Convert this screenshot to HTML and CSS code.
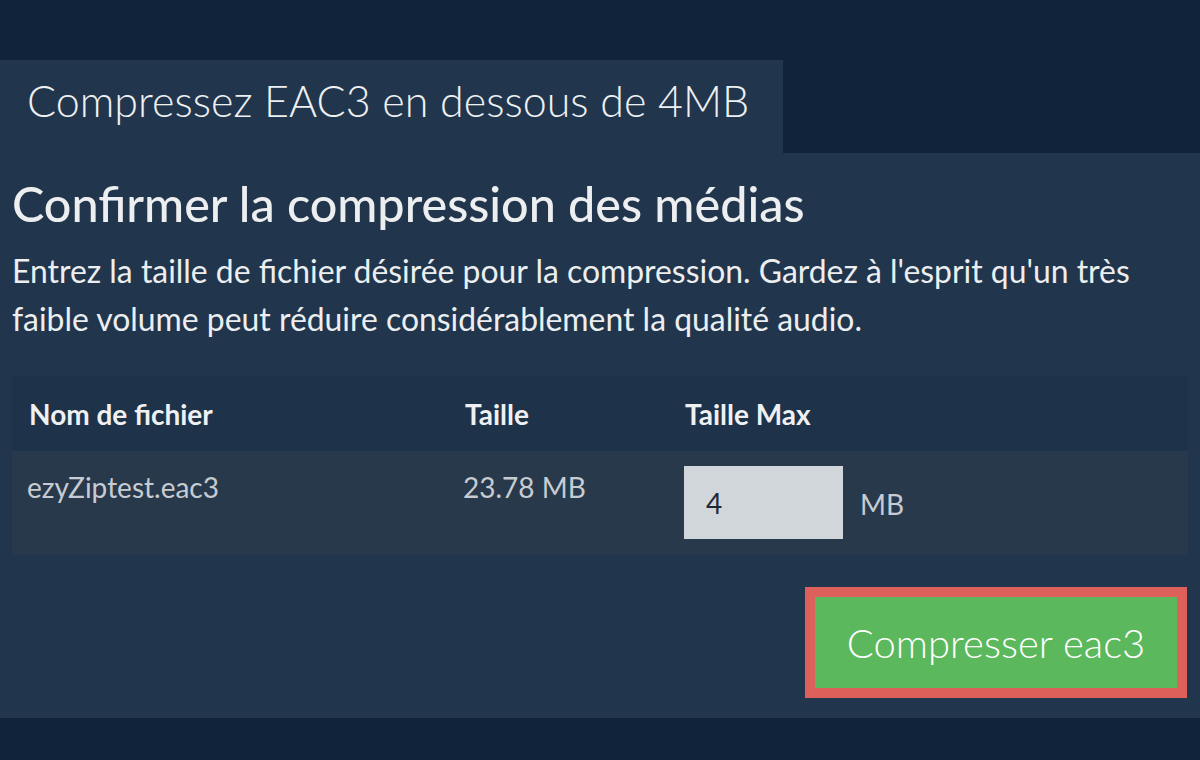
FILE: index.html
```html
<!DOCTYPE html>
<html lang="fr">
<head>
<meta charset="utf-8">
<link rel="stylesheet" href="styles.css">
</head>
<body>
<div class="page">
  <div class="tab">Compressez EAC3 en dessous de 4MB</div>
  <section class="panel">
    <h1 class="title">Confirmer la compression des médias</h1>
    <p class="desc">Entrez la taille de fichier désirée pour la compression. Gardez à l'esprit qu'un très faible volume peut réduire considérablement la qualité audio.</p>
    <div class="table">
      <div class="row head">
        <div class="cell">Nom de fichier</div>
        <div class="cell">Taille</div>
        <div class="cell">Taille Max</div>
      </div>
      <div class="row body">
        <div class="cell">ezyZiptest.eac3</div>
        <div class="cell">23.78 MB</div>
        <div class="cell max">
          <input class="size" type="text" value="4">
          <span class="unit">MB</span>
        </div>
      </div>
    </div>
    <div class="actions">
      <button class="go">Compresser eac3</button>
    </div>
  </section>
</div>
</body>
</html>
```

FILE: styles.css
```css
html, body {
  margin: 0;
  padding: 0;
  background: #10233a;
  font-family: Lato, "Noto Sans", sans-serif;
}
.page {
  padding-top: 60px;
  width: 1200px;
  height: 760px;
  box-sizing: border-box;
}
.tab {
  display: inline-flex;
  align-items: center;
  width: 783px;
  height: 93px;
  box-sizing: border-box;
  padding: 0 0 12px 27px;
  background: #21364d;
  color: #eef0f2;
  font-size: 43px;
  font-weight: 300;
  vertical-align: top;
}
.panel {
  background: #21364d;
  padding: 19px 12px 20px 12px;
}
.title {
  margin: 0;
  font-size: 48.5px;
  font-weight: 500;
  color: #eceef0;
  line-height: 62px;
}
.desc {
  margin: 13px 0 0 0;
  font-size: 31.9px;
  line-height: 48px;
  color: #eceef0;
}
.table {
  margin-top: 33px;
}
.row {
  display: grid;
  grid-template-columns: 436px 220px 1fr;
}
.head {
  background: #1e3349;
  height: 75px;
  align-items: center;
}
.head .cell {
  font-weight: 700;
  font-size: 28px;
  color: #eef0f2;
  padding-left: 17px;
}
.body {
  background: #29394c;
  height: 103px;
  align-items: start;
}
.body .cell {
  font-size: 28px;
  color: #c6ccd2;
  padding: 19px 0 0 15px;
}
.body .cell.max {
  padding: 15px 0 0 16px;
  display: flex;
  align-items: center;
}
.size {
  width: 159px;
  height: 73px;
  box-sizing: border-box;
  border: none;
  background: #d1d6db;
  font-family: Lato, "Noto Sans", sans-serif;
  font-size: 28px;
  color: #1f2a36;
  padding: 0 0 0 22px;
  outline: none;
}
.unit {
  margin-left: 17px;
  font-size: 28px;
  color: #c6ccd2;
  padding-top: 2px;
}
.actions {
  display: flex;
  justify-content: flex-end;
  margin-top: 33px;
  padding-right: 1px;
}
.go {
  width: 382px;
  height: 111px;
  box-sizing: border-box;
  border: 10px solid #dd605b;
  background: #5cb85c;
  color: #ffffff;
  font-family: Lato, "Noto Sans", sans-serif;
  font-size: 40px;
  font-weight: 300;
  padding: 0;
}
```
